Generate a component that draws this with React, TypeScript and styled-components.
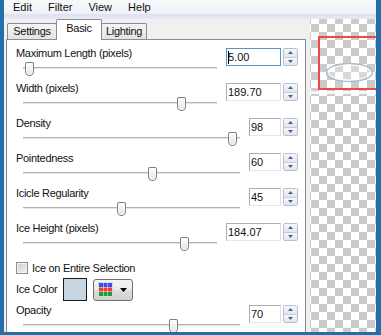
import React from 'react';
import styled, { createGlobalStyle } from 'styled-components';

const FRAME_BLUE = '#2370a8';
const TAB_BORDER = '#898c95';
const TEXT = '#111';

const GlobalStyle = createGlobalStyle`
  html, body {
    margin: 0;
    padding: 0;
    background: #fff;
  }
  body {
    font-family: "Liberation Sans", Arial, sans-serif;
    font-size: 11px;
    color: ${TEXT};
  }
  * {
    box-sizing: border-box;
  }
`;

const Frame = styled.div`
  width: 381px;
  height: 335px;
  display: flex;
  flex-direction: column;
  overflow: hidden;
  background: #f0f0f0;
  border-left: 4px solid ${FRAME_BLUE};
  border-right: 5px solid ${FRAME_BLUE};
  border-bottom: 3px solid ${FRAME_BLUE};
`;

const MenuBar = styled.div`
  flex: none;
  display: flex;
  height: 14px;
  padding-left: 1px;
  background: linear-gradient(#f8f9fc, #eef1f7);
`;

const MenuItem = styled.span`
  padding: 0 8px;
  line-height: 14px;
`;

const Body = styled.div`
  flex: 1;
  min-height: 0;
  display: flex;
  background: linear-gradient(#dbe2ef, #e6eaf3 5px, #f0f0f0 5px);
`;

const DialogSide = styled.div`
  flex: none;
  width: 302px;
  display: flex;
  flex-direction: column;
  padding: 5px 0 0 2px;
`;

const TabStrip = styled.div`
  position: relative;
  z-index: 1;
  display: flex;
  align-items: flex-end;
  height: 21px;
  margin-bottom: -1px;
  padding-left: 1px;
`;

const Tab = styled.div<{ $active?: boolean; $width: number }>`
  width: ${(p) => p.$width}px;
  height: ${(p) => (p.$active ? 21 : 16)}px;
  margin: ${(p) => (p.$active ? '0 -1px' : '0 0 1px')};
  position: relative;
  z-index: ${(p) => (p.$active ? 2 : 1)};
  border: 1px solid ${TAB_BORDER};
  border-bottom: none;
  border-radius: 2px 2px 0 0;
  background: ${(p) => (p.$active ? '#fff' : 'linear-gradient(#f5f5f5, #e3e3e3)')};
  padding-top: ${(p) => (p.$active ? 2 : 1)}px;
  text-align: center;
  line-height: 13px;
  letter-spacing: -0.3px;
`;

const Panel = styled.div`
  flex: 1;
  background: #fff;
  border: 1px solid ${TAB_BORDER};
  border-bottom: none;
  padding: 8px 7px 0 9px;
`;

const Row = styled.div`
  display: flex;
  align-items: flex-start;
  height: 35px;
`;

const Control = styled.div`
  flex: 1;
  margin-right: 9px;
`;

const Label = styled.div`
  height: 11px;
  line-height: 11px;
  white-space: nowrap;
  letter-spacing: -0.3px;
`;

const Slider = styled.div`
  position: relative;
  height: 14px;
  margin: 3px 0 0 7px;
  padding-top: 5px;
`;

const Track = styled.div`
  height: 2px;
  background: #b4b4b4;
  border-bottom: 1px solid #e4e4e4;
`;

const Thumb = styled.div`
  position: absolute;
  top: 0;
  width: 9px;
  height: 14px;
  border: 1px solid #7d7d7d;
  border-radius: 2px 2px 4px 4px / 2px 2px 5px 5px;
  background: linear-gradient(#fdfdfd, #e4e4e4);
  box-shadow: inset 0 0 0 1px rgba(255, 255, 255, 0.7);
`;

const SpinBox = styled.div`
  display: flex;
  gap: 2px;
`;

const NumberField = styled.div<{ $wide?: boolean; $focused?: boolean }>`
  display: flex;
  align-items: center;
  width: ${(p) => (p.$wide ? 55 : 32)}px;
  height: 18px;
  padding-left: 1px;
  border: 1px solid ${(p) => (p.$focused ? '#5b93c8' : '#abadb3')};
  border-right-color: ${(p) => (p.$focused ? '#5b93c8' : '#dbdfe6')};
  border-bottom-color: ${(p) => (p.$focused ? '#5b93c8' : '#e3e9ef')};
  background: #fff;
  line-height: 16px;
`;

const Caret = styled.span`
  width: 1px;
  height: 13px;
  margin-right: -1px;
  background: #000;
`;

const Spinner = styled.div`
  display: flex;
  flex-direction: column;
  width: 15px;
  height: 18px;
  border: 1px solid #b9c0cc;
  border-radius: 2px;
`;

const SpinButton = styled.div`
  flex: 1;
  display: flex;
  align-items: center;
  justify-content: center;
  background: linear-gradient(#f5f7fa, #e1e6ee);

  & + & {
    border-top: 1px solid #c7cdd8;
  }
`;

const CheckRow = styled.div`
  display: flex;
  align-items: center;
  gap: 4px;
  height: 13px;
  margin-top: 3px;
  letter-spacing: -0.3px;
`;

const CheckBox = styled.span`
  width: 12px;
  height: 12px;
  border: 1px solid #8e8f8f;
  background: linear-gradient(135deg, #c9ccd1, #f4f4f4);
  box-shadow: inset 0 0 0 1px #f2f2f2;
`;

const ColorRow = styled.div`
  display: flex;
  align-items: center;
  height: 23px;
  margin-top: 4px;
`;

const Swatch = styled.div<{ $color: string }>`
  width: 24px;
  height: 23px;
  margin-left: 6px;
  border: 1px solid #1a1a1a;
  background: ${(p) => p.$color};
`;

const PickerButton = styled.div`
  display: flex;
  align-items: center;
  gap: 7px;
  width: 40px;
  height: 22px;
  margin-left: 6px;
  padding-left: 4px;
  border: 1px solid #707070;
  border-radius: 3px;
  background: linear-gradient(#f3f3f3, #ebebeb 50%, #dddddd 50%, #d0d0d0);
`;

const OpacityRow = styled(Row)`
  margin-top: 4px;
`;

const Preview = styled.div`
  flex: 1;
  min-width: 0;
  overflow: hidden;
  margin: 5px 0 0 4px;
  background: repeating-conic-gradient(#cbcbcb 0 25%, #fff 0 50%) 1px -3px / 16px 16px;
`;

const SpinArrow = ({ up }: { up?: boolean }) => (
  <svg width="5" height="3" viewBox="0 0 5 3">
    <path d={up ? 'M0 3 L2.5 0 L5 3 Z' : 'M0 0 L5 0 L2.5 3 Z'} fill="#4d6089" />
  </svg>
);

const ColorGridIcon = () => (
  <svg width="15" height="15" viewBox="0 0 15 15">
    <rect x="0" y="0" width="15" height="15" fill="#f4f4f4" stroke="#9a9a9a" strokeWidth="0.6" />
    {[0, 1, 2].map((c) => (
      <React.Fragment key={c}>
        <rect x={1 + c * 4.5} y={1} width={4} height={4} fill={c === 1 ? '#5a3ee8' : '#2f55f0'} />
        <rect x={1 + c * 4.5} y={5.5} width={4} height={4} fill="#f03a32" />
        <rect x={1 + c * 4.5} y={10} width={4} height={4} fill="#1f9a3c" />
      </React.Fragment>
    ))}
  </svg>
);

const DropArrow = () => (
  <svg width="7" height="4" viewBox="0 0 7 4">
    <path d="M0 0 H7 L3.5 4 Z" fill="#000" />
  </svg>
);

interface SliderSpec {
  label: string;
  value: string;
  thumb: number;
  wide?: boolean;
  focused?: boolean;
}

const sliders: SliderSpec[] = [
  { label: 'Maximum Length (pixels)', value: '5.00', thumb: 2, wide: true, focused: true },
  { label: 'Width (pixels)', value: '189.70', thumb: 154, wide: true },
  { label: 'Density', value: '98', thumb: 205 },
  { label: 'Pointedness', value: '60', thumb: 125 },
  { label: 'Icicle Regularity', value: '45', thumb: 94 },
  { label: 'Ice Height (pixels)', value: '184.07', thumb: 157, wide: true },
];

const opacity: SliderSpec = { label: 'Opacity', value: '70', thumb: 146 };

const SliderControl = ({ spec }: { spec: SliderSpec }) => (
  <>
    <Control>
      <Label>{spec.label}</Label>
      <Slider>
        <Track />
        <Thumb style={{ left: spec.thumb }} />
      </Slider>
    </Control>
    <SpinBox>
      <NumberField $wide={spec.wide} $focused={spec.focused}>
        {spec.focused && <Caret />}
        {spec.value}
      </NumberField>
      <Spinner>
        <SpinButton>
          <SpinArrow up />
        </SpinButton>
        <SpinButton>
          <SpinArrow />
        </SpinButton>
      </Spinner>
    </SpinBox>
  </>
);

// selection marquee runs off the right edge of the preview
const PreviewArt = () => (
  <svg width="66" height="120" viewBox="0 0 66 120">
    <path d="M66 18 H9 V70 H66" fill="none" stroke="#ee4848" strokeWidth="2" />
    <ellipse cx="39.5" cy="53.5" rx="23" ry="9" fill="rgba(255,255,255,0.25)" stroke="#a9bcc7" strokeWidth="1.4" />
    <ellipse cx="39.5" cy="53.5" rx="21" ry="7.4" fill="none" stroke="rgba(255,255,255,0.85)" strokeWidth="1.2" />
    <rect x="0" y="72" width="66" height="3" fill="#fff" opacity="0.85" />
  </svg>
);

const App = () => {
  return (
    <>
      <GlobalStyle />
      <Frame>
        <MenuBar>
          <MenuItem>Edit</MenuItem>
          <MenuItem>Filter</MenuItem>
          <MenuItem>View</MenuItem>
          <MenuItem>Help</MenuItem>
        </MenuBar>
        <Body>
          <DialogSide>
            <TabStrip>
              <Tab $width={50}>Settings</Tab>
              <Tab $width={46} $active>
                Basic
              </Tab>
              <Tab $width={46}>Lighting</Tab>
            </TabStrip>
            <Panel>
              {sliders.map((s) => (
                <Row key={s.label}>
                  <SliderControl spec={s} />
                </Row>
              ))}
              <CheckRow>
                <CheckBox />
                Ice on Entire Selection
              </CheckRow>
              <ColorRow>
                <Label>Ice Color</Label>
                <Swatch $color="#c7d6e1" />
                <PickerButton>
                  <ColorGridIcon />
                  <DropArrow />
                </PickerButton>
              </ColorRow>
              <OpacityRow>
                <SliderControl spec={opacity} />
              </OpacityRow>
            </Panel>
          </DialogSide>
          <Preview>
            <PreviewArt />
          </Preview>
        </Body>
      </Frame>
    </>
  );
};

export default App;
